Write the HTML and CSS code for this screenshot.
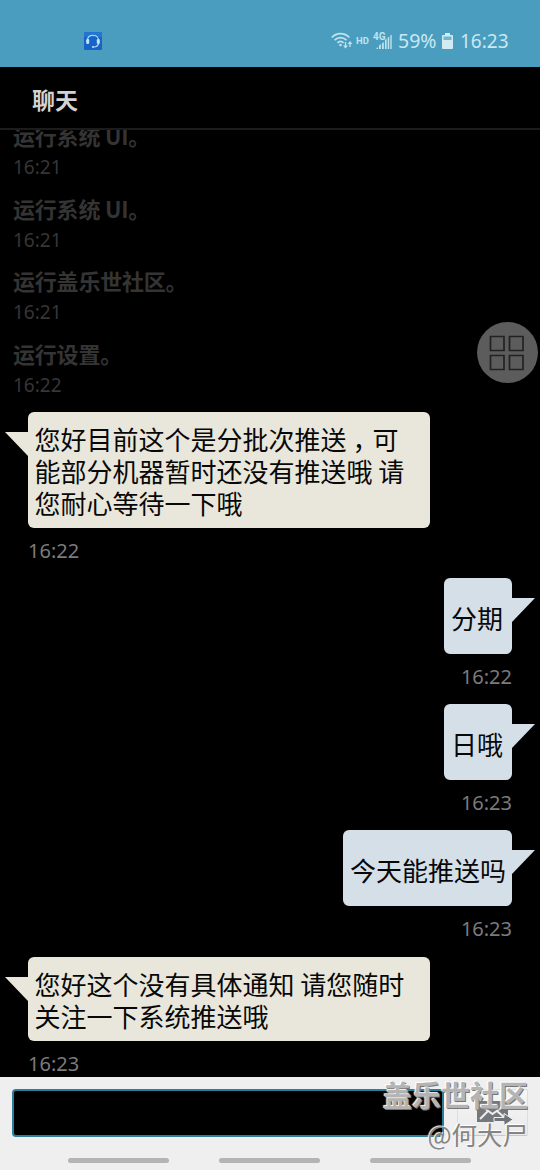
FILE: index.html
```html
<!DOCTYPE html>
<html lang="zh-CN">
<head>
<meta charset="utf-8">
<title>聊天</title>
<link rel="stylesheet" href="styles.css">
</head>
<body>
<div class="phone">
  <header class="status">
    <svg class="headset" width="18" height="18" viewBox="0 0 18 18"><rect width="18" height="18" rx="1" fill="#1764c8"/><rect width="18" height="5" fill="#2c80d6" opacity=".6"/><path d="M3.500 8.500C3 1.500 14.500 1.500 14.500 8.500M14.500 11C14.300 13.500 13 15 9.500 15" fill="none" stroke="#b9dcf5" stroke-width="1.200"/><rect x="2.200" y="7" width="3" height="5" rx="1.300" fill="#c3e1f8"/><rect x="12.800" y="7" width="3" height="5" rx="1.300" fill="#c3e1f8"/><circle cx="9" cy="15" r="1" fill="#c3e1f8"/></svg>
    <div class="indicators">
      <svg class="wifi" width="22" height="18" viewBox="0 0 22 18" fill="none" stroke="#bfe4ee" stroke-width="1.700"><path d="M.8 5.500C5.500.4 13.500.4 18.300 5.500M3.600 8.200C7 4.800 12 4.800 15.500 8.200M6.400 10.800C8.300 9 10.700 9 12.600 10.800"/><circle cx="9.500" cy="13" r="1.300" fill="#bfe4ee" stroke="none"/><path d="M14.500 10v5.500M19 15v-5" stroke-width="1.300"/><path d="M12 13.500h5l-2.500 3zM16.600 12h4.800L19 9z" fill="#bfe4ee" stroke="none"/></svg>
      <span class="hd">HD</span>
      <span class="signal">
        <svg width="19" height="18" viewBox="0 0 19 18" fill="#bfe4ee"><path d="M3 17h2v-2zM6 17h1.800v-5L6 13.500zM9 17h1.800v-7L9 11.500zM12 17h1.600V6.500L12 8zM14.700 17h1.500V4.500l-1.500 1.200zM17.300 17h1.400V2.500l-1.400 1.200z"/></svg>
        <span class="net">4G</span>
      </span>
      <span class="pct">59%</span>
      <svg class="battery" width="11" height="16" viewBox="0 0 11 16"><path d="M3 0h5v2h2q1 0 1 1v12q0 1-1 1H1q-1 0-1-1V3q0-1 1-1h2z" fill="#d2eaf2"/><rect x="1.500" y="3.500" width="8" height="3.500" fill="#76b4cb"/></svg>
      <span class="clock">16:23</span>
    </div>
  </header>
  <h1 class="title">聊天</h1>
  <main class="chat">
    <div class="log"><p>运行系统 UI。</p><time>16:21</time></div>
    <div class="log"><p>运行系统 UI。</p><time>16:21</time></div>
    <div class="log"><p>运行盖乐世社区。</p><time>16:21</time></div>
    <div class="log"><p>运行设置。</p><time>16:22</time></div>
    <div class="msg agent">
      <div class="bubble">您好目前这个是分批次推送<span class="comma">，</span>可<br>能部分机器暂时还没有推送哦 请<br>您耐心等待一下哦<svg class="tail" width="23" height="24" viewBox="0 0 23 24"><path d="M0 0H23V24z"/></svg></div>
      <time>16:22</time>
    </div>
    <div class="msg user">
      <div class="bubble">分期<svg class="tail" width="23" height="24" viewBox="0 0 23 24"><path d="M23 0H0V24z"/></svg></div>
      <time>16:22</time>
    </div>
    <div class="msg user">
      <div class="bubble">日哦<svg class="tail" width="23" height="24" viewBox="0 0 23 24"><path d="M23 0H0V24z"/></svg></div>
      <time>16:23</time>
    </div>
    <div class="msg user">
      <div class="bubble">今天能推送吗<svg class="tail" width="23" height="24" viewBox="0 0 23 24"><path d="M23 0H0V24z"/></svg></div>
      <time>16:23</time>
    </div>
    <div class="msg agent last">
      <div class="bubble">您好这个没有具体通知 请您随时<br>关注一下系统推送哦<svg class="tail" width="23" height="24" viewBox="0 0 23 24"><path d="M0 0H23V24z"/></svg></div>
      <time>16:23</time>
    </div>
  </main>
  <footer class="composer">
    <div class="entry">
      <div class="input"></div>
      <div class="send"><svg width="36" height="24" viewBox="0 0 36 24"><path d="M0 0h31v21H0z" fill="#74787c"/><path d="M3 4l12.500 9L28 4M3 18l8-8M28 17l-8-7" fill="none" stroke="#eee" stroke-width="2"/><path d="M17 16.500h10v-4l9 6-9 6v-4H17z" fill="#6f7376" stroke="#eee" stroke-width="1"/></svg></div>
    </div>
    <div class="nav"><i></i><i></i><i></i></div>
  </footer>
  <div class="float"><svg width="36" height="36" viewBox="0 0 36 36" fill="none" stroke="#222" stroke-width="1.700"><path d="M1.500 1.500h13.500v14H1.500zM20.500 1.500H34v14H20.500zM1.500 20.500h13.500v14H1.500zM20.500 20.500H34v14H20.500z"/></svg></div>
  <div class="mark"><strong>盖乐世社区</strong><span>@何大尸</span></div>
</div>
</body>
</html>
```
FILE: styles.css
```css
* { box-sizing: border-box; margin: 0; padding: 0; }
body { background: #000; font-family: "Noto Sans", "Noto Sans CJK SC", sans-serif; }
.phone { position: relative; width: 540px; height: 1170px; display: flex; flex-direction: column; overflow: hidden; background: #000; }
.status { height: 67px; flex: none; background: #4a9dbe; display: flex; align-items: center; justify-content: space-between; padding: 15px 32px 0 84px; color: #c9e8f1; }
.indicators { display: flex; align-items: center; height: 24px; }
.wifi { margin-right: 3px; }
.hd { font: 700 9.5px/18px Roboto, sans-serif; width: 14px; margin-right: 3px; color: #bfe4ee; }
.signal { position: relative; width: 19px; height: 18px; margin-right: 6px; }
.signal svg { display: block; }
.net { position: absolute; left: 0; top: -1px; font: 700 10px/11px Roboto, sans-serif; color: #bfe4ee; }
.pct { font-size: 19.5px; line-height: 26px; width: 39px; margin-right: 5px; }
.battery { margin-right: 7px; }
.clock { font-size: 19px; line-height: 26px; width: 48px; white-space: nowrap; }
.title { height: 63px; flex: none; padding-left: 32px; border-bottom: 2px solid #1c1c1c; color: #d2d2d2; font: 700 23px/64px "Noto Sans CJK SC", sans-serif; }
.chat { flex: 1; min-height: 0; overflow: hidden; }
.log { height: 72.5px; padding-left: 13px; color: #343434; }
.log:first-child { margin-top: -8px; }
.log p { font: 700 22px/26px "Noto Sans CJK SC", sans-serif; height: 30px; letter-spacing: -0.2px; }
.log time { display: block; font-size: 19px; line-height: 30px; color: #363636; }
.msg { display: flex; flex-direction: column; align-items: flex-start; padding: 0 28px; }
.bubble { position: relative; padding: 12px 7px 8px; border-radius: 6px; font: 400 26px/32px "Noto Sans CJK SC", sans-serif; color: #080808; white-space: nowrap; }
.comma { padding-left: 6px; margin-right: -6px; }
.msg time { font-size: 20px; line-height: 30px; margin: 8px 0 12px; color: #7b7b7b; }
.agent .bubble { width: 402px; padding: 11px 6px 9px 6.5px; background: #e9e7db; }
.last { margin-top: 1px; }
.user { align-items: flex-end; }
.user .bubble { padding: 24px 6px 20px 7px; background: #d5dfe8; min-width: 68px; }
.tail { position: absolute; top: 20px; }
.agent .tail { left: -23px; fill: #e9e7db; }
.user .tail { right: -23px; fill: #d5dfe8; }
.composer { height: 93px; flex: none; background: #efefef; padding: 12px 12px 0; }
.entry { display: flex; justify-content: space-between; height: 48px; }
.input { width: 432px; height: 48px; background: #000; border: 2px solid #2b7f9d; border-radius: 4px; }
.send { width: 71px; height: 47px; display: flex; align-items: center; justify-content: center; padding-left: 5px; background: linear-gradient(#f6f6f6, #eaeaea); border: 1px solid #dedede; border-bottom-color: #c8c8c8; border-radius: 2px; }
.nav { display: flex; gap: 50px; padding: 21px 0 0 56px; }
.nav i { width: 101px; height: 5px; border-radius: 3px; background: #b4b4b4; }
.float { position: absolute; left: 477px; top: 322px; width: 61px; height: 61px; border-radius: 50%; background: #5c5c5c; display: flex; align-items: center; justify-content: center; }
.float svg { margin-right: 1px; }
.mark { position: absolute; right: 12px; top: 1075px; display: flex; flex-direction: column; align-items: flex-end; white-space: nowrap; font-family: "Noto Sans CJK SC", sans-serif; }
.mark strong { font-size: 29px; line-height: 38px; color: #b4b4b4; text-shadow: -1px -1px 1px #fff, 1px 1px 0 #777; }
.mark span { font-size: 25.5px; line-height: 42px; color: #858585; text-shadow: -1px -1px 1px #fff; }
```
